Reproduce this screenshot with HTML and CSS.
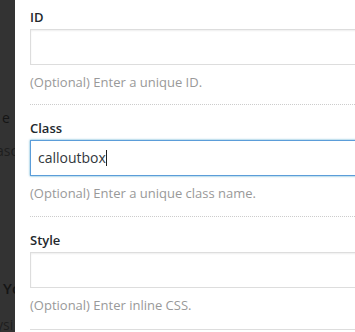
FILE: index.html
```html
<!DOCTYPE html>
<html lang="en">
<head>
    <meta charset="UTF-8">
    <meta name="viewport" content="width=device-width, initial-scale=1.0">
    <title>Element Settings</title>
    <link rel="stylesheet" href="styles.css">
</head>
<body>
    <div class="backdrop">
        <span class="peek peek-e">e</span>
        <span class="peek peek-asc">asc</span>
        <span class="peek peek-yo">Yo</span>
        <span class="peek peek-ysi">ysi</span>
    </div>
    <main class="panel">
        <div class="field first">
            <label for="el-id">ID</label>
            <input type="text" id="el-id">
            <p class="hint">(Optional) Enter a unique ID.</p>
        </div>
        <div class="field">
            <label for="el-class">Class</label>
            <div class="input focused">calloutbox<span class="caret"></span></div>
            <p class="hint">(Optional) Enter a unique class name.</p>
        </div>
        <div class="field last">
            <label for="el-style">Style</label>
            <input type="text" id="el-style">
            <p class="hint">(Optional) Enter inline CSS.</p>
        </div>
    </main>
</body>
</html>
```

FILE: styles.css
```css
body { margin: 0; font-family: "Open Sans", "Noto Sans", sans-serif; font-size: 13px; color: #23282d; display: flex; height: 332px; overflow: hidden; background: #fff; }
.backdrop { width: 15px; flex: none; background: #333; position: relative; overflow: hidden; }
.peek { position: absolute; color: #151515; font-size: 14px; white-space: nowrap; }
.peek-e { top: 108px; left: 2px; }
.peek-asc { top: 141px; left: -4px; color: #1e1e1e; }
.peek-yo { top: 278px; left: 3px; font-weight: 600; font-size: 15px; }
.peek-ysi { top: 315px; left: -4px; color: #1e1e1e; }
.panel { flex: 1; padding-left: 15px; min-width: 0; overflow: hidden; }
.field { padding: 14px 0 14px; border-bottom: 1px dotted #ccc; }
.field.first { padding-top: 8px; padding-bottom: 13px; }
.field.last { border-bottom: 1px solid #ddd; padding-bottom: 15px; }
label { display: block; font-weight: 600; line-height: 18px; margin-bottom: 3px; color: #23282d; }
input, .input { display: block; box-sizing: border-box; width: 340px; height: 36px; margin: 0; padding: 0 7px; border: 1px solid #ddd; border-right: none; box-shadow: inset 0 1px 2px rgba(0,0,0,0.07); font: inherit; font-size: 14px; background: #fff; }
.input { line-height: 34px; color: #32373c; }
.input.focused { border-color: #5b9dd9; box-shadow: 0 0 2px rgba(30,140,190,0.8); }
.caret { display: inline-block; width: 1px; height: 16px; background: #222; vertical-align: -3px; }
.hint { margin: 8px 0 0; line-height: 18px; color: #999; }
```
